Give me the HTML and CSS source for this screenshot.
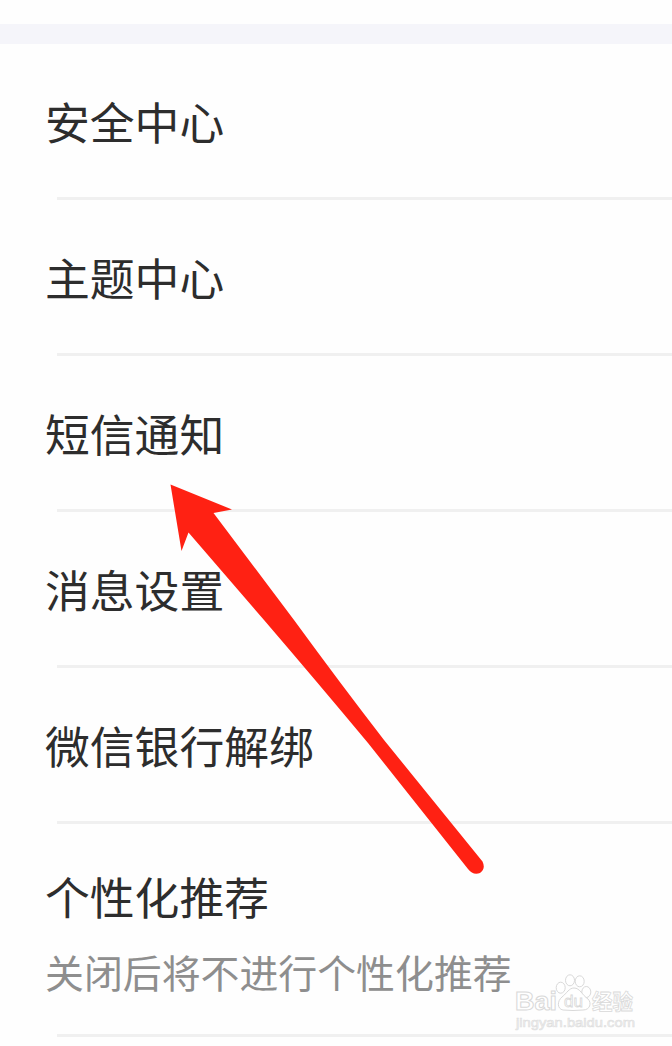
FILE: index.html
```html
<!DOCTYPE html>
<html lang="zh-CN">
<head>
<meta charset="UTF-8">
<title>设置</title>
<link rel="stylesheet" href="styles.css">
</head>
<body>
<main class="page">
  <div class="section-gap"></div>
  <ul class="list">
    <li class="item">安全中心</li>
    <li class="item">主题中心</li>
    <li class="item">短信通知</li>
    <li class="item">消息设置</li>
    <li class="item">微信银行解绑</li>
    <li class="item item-double">
      <span class="title">个性化推荐</span>
      <span class="note">关闭后将不进行个性化推荐</span>
    </li>
  </ul>
  <svg class="arrow" width="672" height="1046" viewBox="0 0 672 1046" aria-hidden="true">
    <path d="M170.500 484.500L232 509.500L213.500 513L294 620Q340 683 384 740L482.500 861.500Q486 869 480 873Q473 875.500 468 869L368 743Q318 683 264 620L188.500 532.500L181.500 551Z"/>
  </svg>
  <svg class="watermark" width="126" height="66" viewBox="0 0 126 66">
    <text class="bai" x="2" y="40" textLength="42" lengthAdjust="spacingAndGlyphs">Bai</text>
    <ellipse cx="47.700" cy="17.700" rx="4.500" ry="5.500"/>
    <ellipse cx="57" cy="10.300" rx="4.500" ry="5.500"/>
    <ellipse cx="66.700" cy="11.300" rx="4.500" ry="5.500"/>
    <ellipse cx="73.300" cy="22" rx="4.500" ry="5.500"/>
    <path d="M61 18C56 18 54 23 49 27C44 31 44 39 50 40Q60 41 70 40C77 40 79 33 75 29C69 25 67 18 61 18Z"/>
    <text class="du" x="51" y="37" textLength="19" lengthAdjust="spacingAndGlyphs">du</text>
    <text class="jingyan" x="79" y="39" textLength="41" lengthAdjust="spacingAndGlyphs">经验</text>
    <text class="site" x="3" y="57" textLength="119" lengthAdjust="spacingAndGlyphs">jingyan.baidu.com</text>
  </svg>
</main>
</body>
</html>
```
FILE: styles.css
```css
* { box-sizing: border-box; }
body { margin: 0; background: #fefefe; }
.page {
  position: relative;
  width: 672px;
  height: 1046px;
  padding-top: 24px;
  overflow: hidden;
  font-family: "Noto Sans CJK SC", sans-serif;
  color: #2d2d2d;
}
.section-gap { height: 20px; background: #f5f5fa; }
.list { list-style: none; margin: 0; padding: 0; }
.item {
  display: flex;
  align-items: center;
  height: 156px;
  padding: 0 0 2px 45px;
  font-size: 44.8px;
  line-height: 66px;
  background: linear-gradient(#f0f0f0, #f0f0f0) 57px 100% / 100% 3px no-repeat;
}
.item-double {
  height: 213px;
  flex-direction: column;
  align-items: flex-start;
  padding-top: 39px;
}
.note { margin-top: 14px; font-size: 38.9px; line-height: 56px; color: #8e8e8e; }
.arrow { position: absolute; left: 0; top: 0; fill: #ff2113; }
.watermark {
  position: absolute;
  left: 513px;
  top: 970px;
  fill: #fff;
  stroke: #d9d9d9;
  stroke-width: 1;
  font-family: "Liberation Sans", "Noto Sans CJK SC", sans-serif;
}
.bai { font-size: 26px; font-weight: bold; stroke-width: 1px; }
.du { font-size: 17px; stroke-width: .8px; }
.jingyan { font-size: 21px; font-weight: bold; stroke-width: .8px; }
.site { font-size: 13px; fill: #f4f4f4; stroke: #dedede; stroke-width: .6px; }
```
